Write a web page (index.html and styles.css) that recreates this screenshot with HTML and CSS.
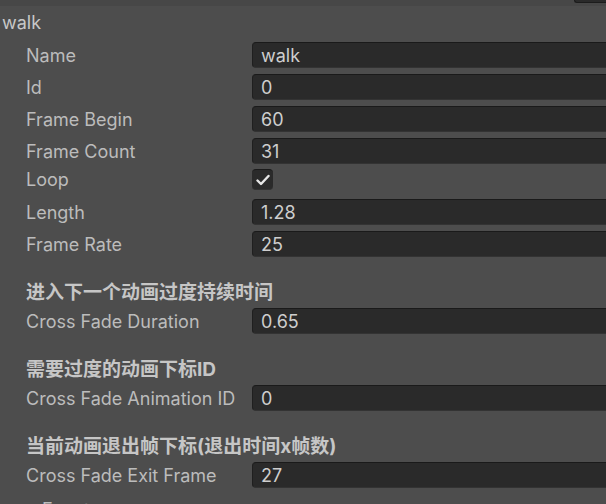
FILE: index.html
```html
<!DOCTYPE html>
<html>
<head>
<meta charset="utf-8">
<link rel="stylesheet" href="styles.css">
</head>
<body>
<div class="inspector">
  <div class="topbar"><div class="top-field"></div></div>
  <div class="title">walk</div>
  <div class="row"><div class="label">Name</div><div class="field">walk</div></div>
  <div class="row"><div class="label">Id</div><div class="field">0</div></div>
  <div class="row"><div class="label">Frame Begin</div><div class="field">60</div></div>
  <div class="row"><div class="label">Frame Count</div><div class="field">31</div></div>
  <div class="row row-toggle"><div class="label">Loop</div>
    <div class="checkbox"><svg width="14" height="12" viewBox="0 0 14 12"><path d="M1.5 6.5 L5 10 L12.5 2" fill="none" stroke="#e6e6e6" stroke-width="2.4" stroke-linecap="round" stroke-linejoin="round"/></svg></div>
  </div>
  <div class="row"><div class="label">Length</div><div class="field">1.28</div></div>
  <div class="row"><div class="label">Frame Rate</div><div class="field">25</div></div>
  <div class="header">进入下一个动画过度持续时间</div>
  <div class="row"><div class="label">Cross Fade Duration</div><div class="field">0.65</div></div>
  <div class="header">需要过度的动画下标ID</div>
  <div class="row"><div class="label">Cross Fade Animation ID</div><div class="field">0</div></div>
  <div class="header">当前动画退出帧下标(退出时间x帧数)</div>
  <div class="row"><div class="label">Cross Fade Exit Frame</div><div class="field">27</div></div>
  <div class="foldout"><span class="arrow"></span><span class="fold-label">Events</span></div>
</div>
</body>
</html>
```
FILE: styles.css
```css
html, body {
  margin: 0;
  padding: 0;
  background: #4d4d4d;
  overflow: hidden;
}
.inspector {
  width: 606px;
  height: 504px;
  overflow: hidden;
  font-family: Inter, "Noto Sans CJK SC", sans-serif;
  font-size: 18px;
  color: #bebebe;
}
.topbar {
  height: 6px;
  background: #474747;
  display: flex;
  justify-content: flex-end;
}
.top-field {
  width: 31px;
  height: 2px;
  border-left: 1px solid #1c1c1c;
  border-bottom: 1px solid #1c1c1c;
  border-bottom-left-radius: 4px;
  background: #2a2a2a;
}
.title {
  height: 33px;
  line-height: 33px;
  padding-left: 2px;
  color: #c8c8c8;
}
.row {
  height: 32px;
  display: flex;
  align-items: center;
}
.label {
  width: 226px;
  padding-left: 26px;
  flex: none;
  white-space: nowrap;
  color: #bcbcbc;
}
.field {
  flex: 1;
  height: 26px;
  box-sizing: border-box;
  margin-right: -8px;
  background: #2a2a2a;
  border-top: 1px solid #1a1a1a;
  border-left: 1px solid #1f1f1f;
  border-bottom: 1px solid #333333;
  border-radius: 4px;
  padding-left: 8px;
  line-height: 25px;
  color: #cecece;
}
.row-toggle {
  height: 29px;
  align-items: flex-start;
  padding-top: 2px;
  box-sizing: border-box;
}
.row-toggle .label {
  line-height: 22px;
}
.checkbox {
  width: 21px;
  height: 21px;
  box-sizing: border-box;
  background: #2a2a2a;
  border-top: 1px solid #1a1a1a;
  border-bottom: 1px solid #333333;
  border-radius: 4px;
  display: flex;
  align-items: center;
  justify-content: center;
}
.header {
  height: 45px;
  box-sizing: border-box;
  padding-top: 20px;
  padding-left: 26px;
  line-height: 26px;
  font-size: 19px;
  font-weight: bold;
  color: #c6c6c6;
  white-space: nowrap;
}
.foldout {
  height: 32px;
  margin-top: 2px;
  display: flex;
  align-items: center;
  padding-left: 21px;
}
.arrow {
  width: 0;
  height: 0;
  border-left: 5px solid transparent;
  border-right: 5px solid transparent;
  border-top: 8px solid #9a9a9a;
  margin-right: 11px;
}
.fold-label {
  color: #bcbcbc;
}
```
